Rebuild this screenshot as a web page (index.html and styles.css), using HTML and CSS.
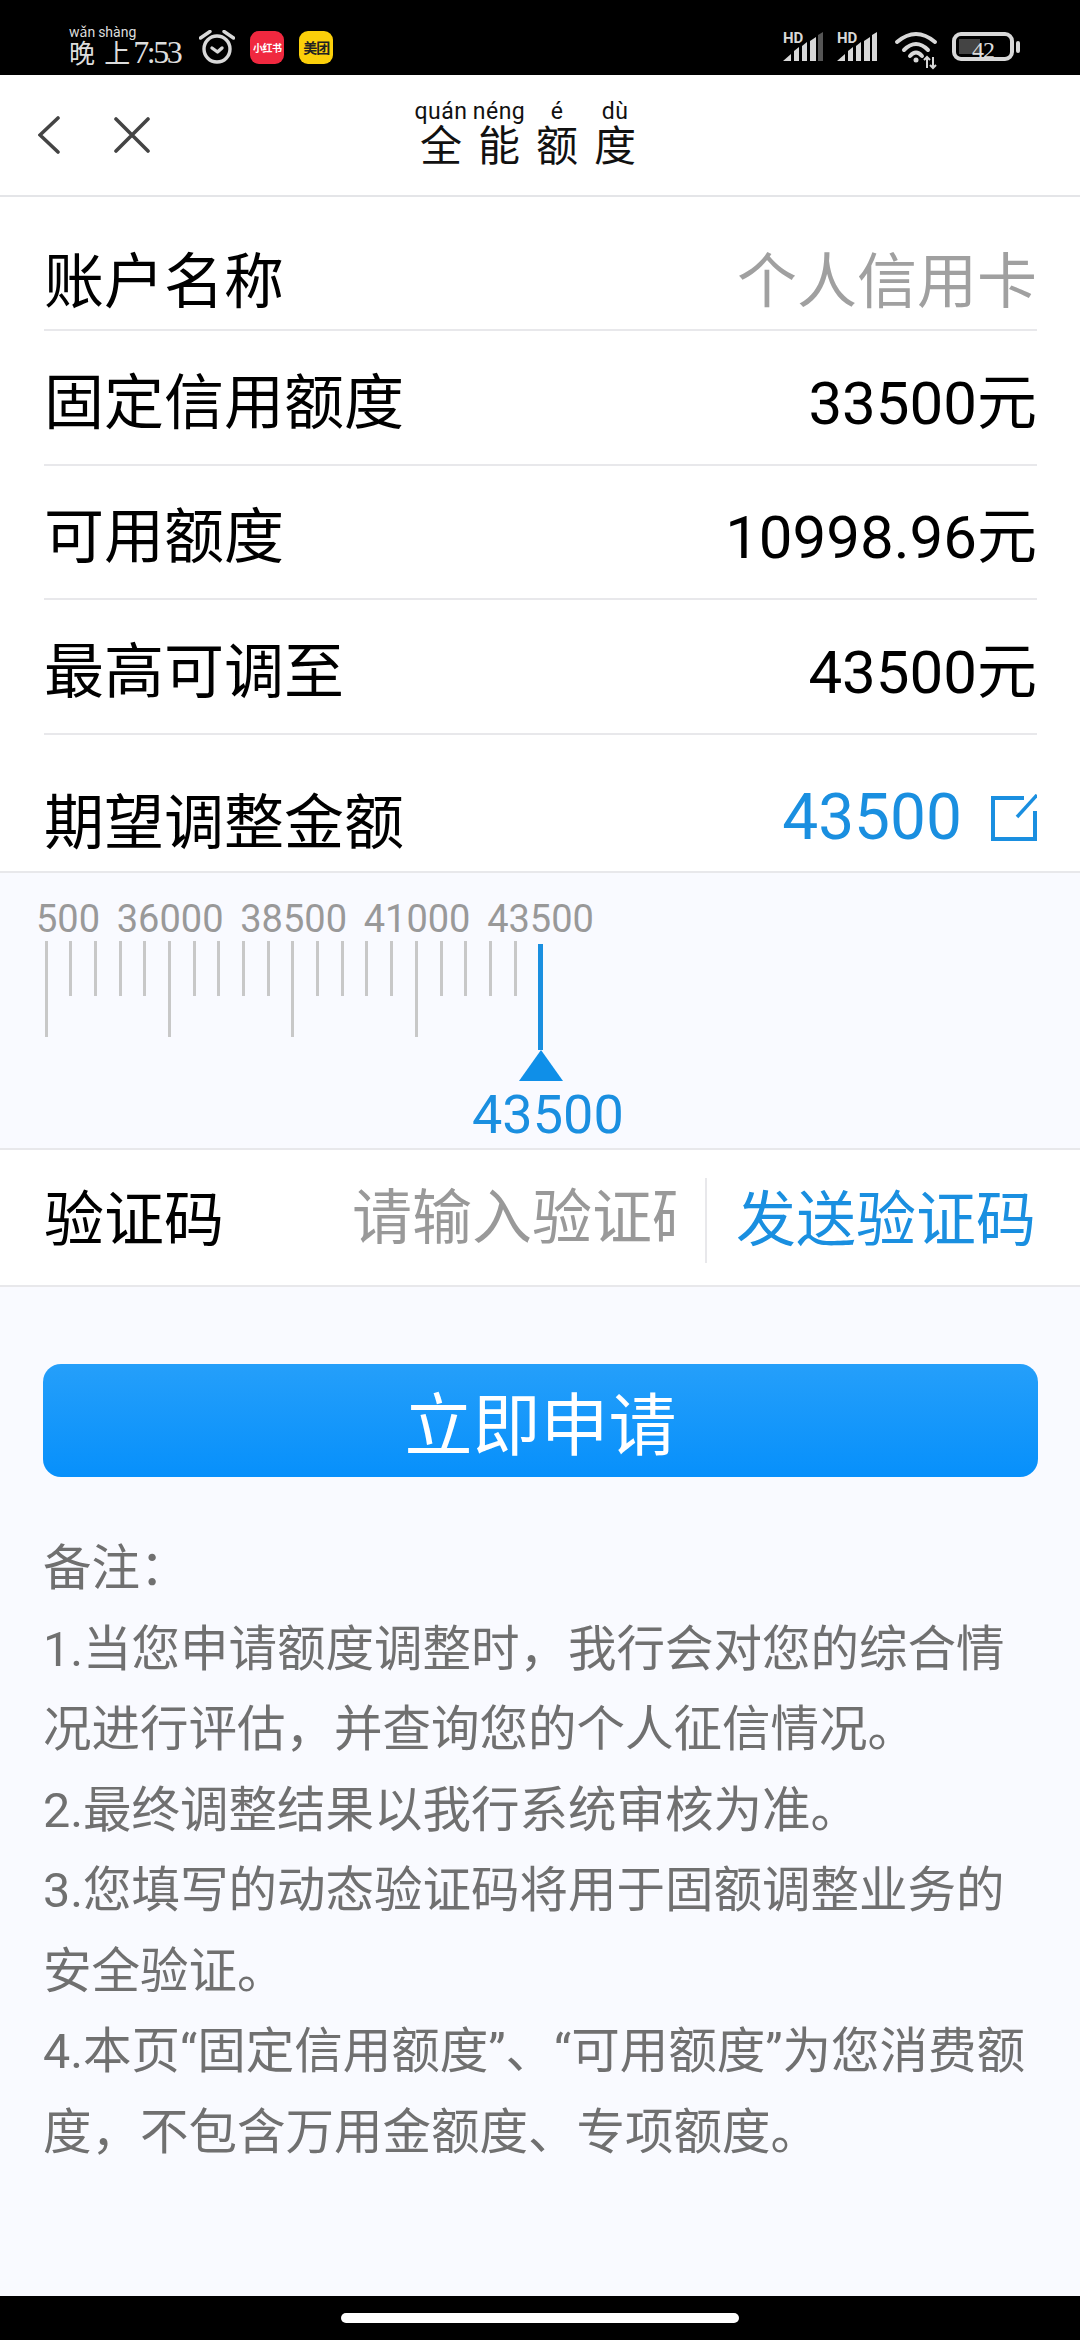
FILE: index.html
```html
<!doctype html>
<html lang="zh-CN">
<head>
    <meta charset="UTF-8" />
    <title>全能额度</title>
    <link rel="stylesheet" href="styles.css">
</head>
<body>
<div class="statusbar">
    <div class="status-left">
        <span class="clock"><ruby class="clock-first">晚<rt>wǎn</rt></ruby><ruby>上<rt>shàng</rt></ruby><span class="clock-time">7:53</span></span>
        <svg class="alarm" width="36" height="34" viewBox="0 0 36 34" fill="none" stroke="#d8d8d8" stroke-width="3.4" stroke-linecap="round" stroke-linejoin="round">
            <circle cx="18" cy="19" r="13" />
            <path d="M1.500 8 L11 1.500 M34.500 8 L25 1.500" />
            <path d="M13 18 L18.500 22 L23 18" />
        </svg>
        <span class="appicon appicon-red">小红书</span>
        <span class="appicon appicon-yellow">美团</span>
    </div>
    <div class="status-right">
        <svg class="signal" width="41" height="30" viewBox="0 0 41 30">
            <text x="0" y="11" class="hd">HD</text>
            <path d="M0 29 L8 22 V29Z M11 29 V19 L16 15 V29Z M19 29 V14 L24 10 V29Z M27 29 V9 L33 5 V29Z" fill="#d8d8d8" />
            <path d="M35 29 V3 L40 0 V29Z" fill="#555" />
        </svg>
        <svg class="signal" width="41" height="30" viewBox="0 0 41 30">
            <text x="0" y="11" class="hd">HD</text>
            <path d="M0 29 L8 22 V29Z M11 29 V19 L16 15 V29Z M19 29 V14 L24 10 V29Z M27 29 V9 L33 5 V29Z M35 29 V3 L40 0 V29Z" fill="#d8d8d8" />
        </svg>
        <svg class="wifi" width="44" height="38" viewBox="0 0 44 38" fill="none" stroke="#d8d8d8" stroke-width="4" stroke-linecap="round">
            <path d="M2 10 Q21 -6 40 10" />
            <path d="M9 18 Q21 6 33 18" />
            <path d="M15 24 Q21 17 27 24" />
            <circle cx="21" cy="28" r="2.500" fill="#d8d8d8" stroke="none" />
            <path d="M32 36 V25 M29 28 L32 25 L35 28 M38 25 V36 M35 33 L38 36 L41 33" stroke-width="2" stroke-linecap="butt" />
        </svg>
        <div class="battery">
            <div class="battery-body"><div class="battery-fill"></div><span class="battery-num">42</span></div>
            <div class="battery-cap"></div>
        </div>
    </div>
</div>

<div class="topbar">
    <svg class="nav-back" width="22" height="38" viewBox="0 0 22 38" fill="none" stroke="#444" stroke-width="3.600" stroke-linecap="round"><path d="M20 2 L2 19 L20 36" /></svg>
    <svg class="nav-close" width="36" height="36" viewBox="0 0 36 36" fill="none" stroke="#444" stroke-width="3.600" stroke-linecap="round"><path d="M2 2 L34 34 M34 2 L2 34" /></svg>
    <div class="title">
        <span class="title-char"><small>quán</small>全</span>
        <span class="title-char"><small>néng</small>能</span>
        <span class="title-char"><small>é</small>额</span>
        <span class="title-char"><small>dù</small>度</span>
    </div>
</div>

<div class="rows">
    <div class="row row-first"><span>账户名称</span><span class="value-grey">个人信用卡</span></div>
    <div class="row"><span>固定信用额度</span><span class="value">33500元</span></div>
    <div class="row"><span>可用额度</span><span class="value">10998.96元</span></div>
    <div class="row"><span>最高可调至</span><span class="value">43500元</span></div>
    <div class="row row-last">
        <span>期望调整金额</span>
        <span class="value-blue">43500
            <svg width="46" height="48" viewBox="0 0 46 48" fill="none" stroke="#1a8fe0" stroke-width="4"><path d="M33 4 H2 V45 H44 V17" /><path d="M46 1 L26 23" stroke-width="3.500" /></svg>
        </span>
    </div>
</div>

<div class="ruler">
    <div class="ruler-labels"><span>500</span><span>36000</span><span>38500</span><span>41000</span><span>43500</span></div>
    <div class="ticks">
        <i class="long"></i><i></i><i></i><i></i><i></i>
        <i class="long"></i><i></i><i></i><i></i><i></i>
        <i class="long"></i><i></i><i></i><i></i><i></i>
        <i class="long"></i><i></i><i></i><i></i><i></i>
    </div>
    <div class="pointer"><div class="pointer-triangle"></div></div>
    <div class="ruler-value">43500</div>
</div>

<div class="code-row">
    <span class="code-label">验证码</span>
    <span class="code-input">请输入验证码</span>
    <span class="code-send">发送验证码</span>
</div>

<div class="bottom">
    <button type="button" class="apply">立即申请</button>
    <div class="notes">
        <p>备注：</p>
        <p>1.当您申请额度调整时，我行会对您的综合情况进行评估，并查询您的个人征信情况。</p>
        <p>2.最终调整结果以我行系统审核为准。</p>
        <p>3.您填写的动态验证码将用于固额调整业务的安全验证。</p>
        <p>4.本页“固定信用额度”、“可用额度”为您消费额度，不包含万用金额度、专项额度。</p>
    </div>
</div>

<div class="navbar"><div class="home-pill"></div></div>
</body>
</html>
```

FILE: styles.css
```css
html,body {
    width: 1080px;
    height: 2340px;
    margin: 0;
    padding: 0;
    overflow: hidden;
}
body {
    background: #f9faff;
    display: flex;
    flex-direction: column;
    font-family: Roboto, "Noto Sans CJK SC", sans-serif;
    color: #000;
}
.statusbar {
    align-items: flex-start;
    background: #000;
    box-sizing: border-box;
    display: flex;
    flex: none;
    height: 75px;
    justify-content: space-between;
    padding: 0 60px 0 69px;
}
.status-left,.status-right {
    display: flex;
}
.status-left {
    align-items: center;
    padding-top: 24px;
}
.status-right {
    align-items: flex-start;
    padding-top: 32px;
}
.clock {
    align-items: flex-end;
    color: #ddd;
    display: flex;
    font-size: 26px;
    white-space: nowrap;
}
.clock-first {
    margin-right: 3px;
}
.clock rt {
    font-size: 14px;
}
.clock-time {
    font-family: "Liberation Serif", serif;
    font-size: 32px;
    letter-spacing: -2.500px;
    line-height: 36px;
    margin-left: -3px;
}
.alarm {
    margin-left: 19px;
}
.appicon {
    align-items: center;
    border-radius: 9px;
    display: flex;
    font-weight: 700;
    height: 33px;
    justify-content: center;
    white-space: nowrap;
    width: 34px;
}
.appicon-red {
    background: #f0283f;
    color: #fff;
    font-size: 10px;
    letter-spacing: -0.5px;
    margin-left: 15px;
}
.appicon-yellow {
    background: #fbcf0a;
    color: #222;
    font-size: 14px;
    letter-spacing: -1px;
    margin-left: 15px;
}
.signal {
    margin-right: 13px;
    overflow: visible;
}
.wifi {
    margin-left: 4px;
    overflow: visible;
}
.hd {
    fill: #d8d8d8;
    font-size: 15px;
    font-weight: 700;
}
.battery {
    align-items: center;
    display: flex;
    gap: 2px;
    margin-left: 13px;
}
.battery-body {
    border: 4px solid #d8d8d8;
    border-radius: 9px;
    box-sizing: border-box;
    height: 29px;
    position: relative;
    width: 62px;
}
.battery-fill {
    background: #444;
    height: 15px;
    margin: 3px 0 0 3px;
    width: 21px;
}
.battery-num {
    color: #ddd;
    font-family: "Liberation Serif", serif;
    font-size: 24px;
    left: 16px;
    letter-spacing: -1px;
    line-height: 22px;
    position: absolute;
    top: 3px;
}
.battery-cap {
    background: #d8d8d8;
    border-radius: 2px;
    height: 12px;
    width: 4px;
}
.topbar {
    align-items: center;
    background: #fff;
    border-bottom: 2px solid #e4e5e8;
    box-sizing: border-box;
    display: flex;
    flex: none;
    height: 122px;
    padding-left: 38px;
}
.nav-close {
    margin-left: 54px;
}
.title {
    color: #111;
    display: flex;
    font-size: 42px;
    margin-left: 262px;
    margin-top: -2px;
}
.title-char {
    align-items: center;
    display: flex;
    flex-direction: column;
    line-height: 42px;
    width: 58px;
}
.title-char small {
    font-size: 23px;
    letter-spacing: 0.5px;
    line-height: 24px;
    margin-bottom: 2px;
}
.rows {
    background: #fff;
    flex: none;
}
.row {
    align-items: center;
    border-bottom: 2px solid #e8e8eb;
    box-sizing: border-box;
    display: flex;
    font-size: 60px;
    height: 134.500px;
    justify-content: space-between;
    margin: 0 43px 0 44px;
}
.row-first {
    height: 134px;
    padding-top: 26px;
}
.row-last {
    border: none;
    height: 136.500px;
    padding-top: 30px;
}
.value-grey {
    color: #a0a0a0;
}
.value-blue {
    align-items: center;
    color: #1a8fe0;
    display: flex;
    font-size: 64px;
    gap: 29px;
}
.ruler {
    border-bottom: 2px solid #e8e8eb;
    border-top: 2px solid #e8e8eb;
    box-sizing: border-box;
    flex: none;
    height: 279px;
    overflow: hidden;
    position: relative;
}
.ruler-labels {
    color: #999;
    display: flex;
    font-size: 38px;
    justify-content: space-between;
    line-height: 44px;
    margin-left: 36px;
    margin-top: 24px;
    width: 558px;
}
.ticks {
    display: flex;
    gap: 21.700px;
    margin-left: 44.500px;
}
.ticks i {
    background: #c8c8c8;
    display: block;
    height: 55px;
    width: 3px;
}
.ticks i.long {
    height: 96px;
}
.pointer {
    background: #1a8fe0;
    height: 106px;
    left: 538px;
    position: absolute;
    top: 71px;
    width: 5px;
}
.pointer-triangle {
    border-bottom: 31px solid #0f8fe8;
    border-left: 22px solid transparent;
    border-right: 22px solid transparent;
    bottom: -31px;
    height: 0;
    left: -19.500px;
    position: absolute;
    width: 0;
}
.ruler-value {
    color: #1a8fe0;
    font-size: 54px;
    left: 472px;
    line-height: 60px;
    position: absolute;
    top: 212px;
}
.code-row {
    align-items: center;
    background: #fff;
    border-bottom: 2px solid #e8e8eb;
    box-sizing: border-box;
    display: flex;
    flex: none;
    font-size: 60px;
    height: 137px;
    line-height: 85px;
    padding-left: 44px;
    padding-top: 6px;
}
.code-label {
    flex: none;
    width: 308px;
}
.code-input {
    color: #999;
    flex: none;
    margin-bottom: 4px;
    overflow: hidden;
    white-space: nowrap;
    width: 324px;
}
.code-send {
    border-left: 2px solid #e8e8eb;
    color: #1a8fe0;
    flex: none;
    margin-left: 29px;
    padding-left: 29px;
    white-space: nowrap;
}
.bottom {
    flex: 1;
    padding: 77px 43px 0;
}
.apply {
    background: linear-gradient(#259ffa, #0790fb);
    border: none;
    border-radius: 18px;
    color: #fff;
    display: block;
    font-family: inherit;
    font-size: 68px;
    height: 113px;
    padding: 0;
    width: 995px;
}
.notes {
    color: #707070;
    font-size: 48.500px;
    line-height: 80.500px;
    margin-top: 52px;
}
.notes p {
    margin: 0;
}
.navbar {
    align-items: center;
    background: #000;
    display: flex;
    flex: none;
    height: 44px;
    justify-content: center;
}
.home-pill {
    background: #fff;
    border-radius: 5px;
    height: 10px;
    width: 398px;
}
```
